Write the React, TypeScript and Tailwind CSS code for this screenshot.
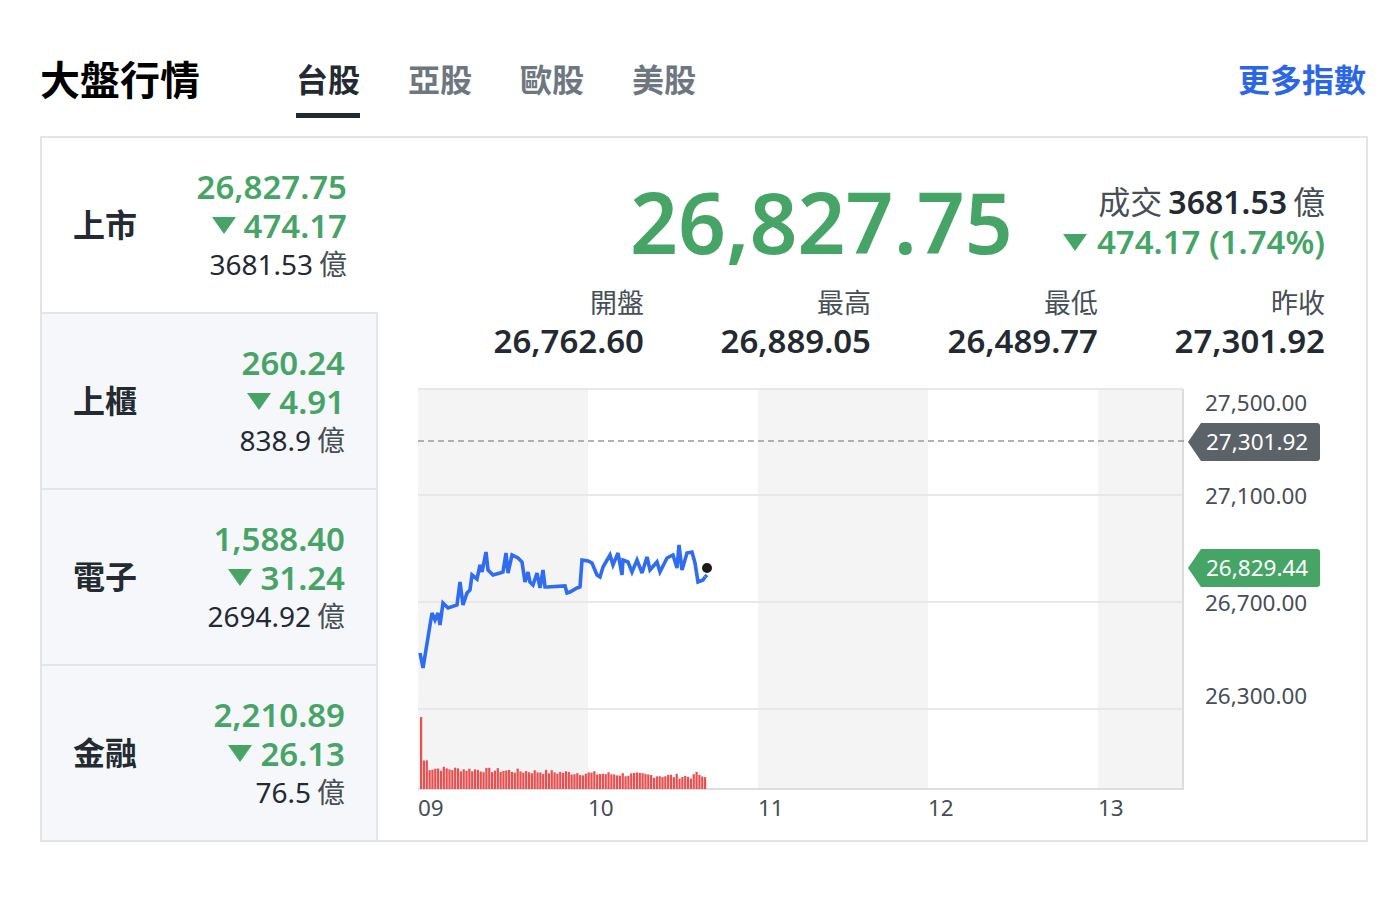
import React from "react";

const GREEN = "#46a566";
const FONT = { fontFamily: '"Noto Sans", "Noto Sans CJK TC", sans-serif' };

const tabs = ["台股", "亞股", "歐股", "美股"];

const markets = [
  { name: "上市", price: "26,827.75", change: "474.17", vol: "3681.53", active: true },
  { name: "上櫃", price: "260.24", change: "4.91", vol: "838.9" },
  { name: "電子", price: "1,588.40", change: "31.24", vol: "2694.92" },
  { name: "金融", price: "2,210.89", change: "26.13", vol: "76.5" },
];

const stats = [
  { label: "開盤", value: "26,762.60" },
  { label: "最高", value: "26,889.05" },
  { label: "最低", value: "26,489.77" },
  { label: "昨收", value: "27,301.92" },
];

// page coords of the intraday line, shifted into the chart svg below
const linePts = [
  [420, 653], [423, 668], [432, 613], [435, 620], [438, 613], [440, 625], [443, 603], [448, 608],
  [457, 605], [460, 582], [463, 605], [467, 593], [470, 590], [472, 575], [477, 579], [480, 565],
  [482, 572], [486, 552], [488, 570], [493, 575], [500, 573], [503, 572], [506, 553], [508, 573],
  [512, 555], [518, 558], [522, 562], [525, 582], [528, 572], [530, 582], [533, 585], [537, 573],
  [540, 588], [543, 570], [545, 587], [547, 587], [565, 586], [567, 593], [570, 592], [577, 588],
  [580, 587], [582, 560], [588, 561], [592, 563], [597, 575], [600, 577], [603, 567], [610, 555],
  [613, 565], [618, 553], [622, 575], [623, 560], [628, 562], [632, 572], [637, 560], [642, 573],
  [647, 557], [650, 570], [657, 562], [660, 572], [667, 558], [673, 555], [677, 568], [679, 545],
  [682, 570], [687, 553], [692, 552], [695, 563], [698, 582], [703, 580], [705, 577],
];

const OX = 417;
const OY = 380;

const volumes = (() => {
  const out: number[] = [];
  let seed = 7;
  const rnd = () => {
    seed = (seed * 9301 + 49297) % 233280;
    return seed / 233280;
  };
  for (let i = 0; i < 101; i++) {
    let h: number;
    if (i === 0) h = 72;
    else if (i < 3) h = 27 + rnd() * 3;
    else {
      const base = 21 - (i / 100) * 9;
      h = base + (rnd() - 0.5) * 5;
    }
    if (i === 97) h = 17;
    out.push(h);
  }
  return out;
})();

const DownTriangle = ({ w = 24, h = 17 }: { w?: number; h?: number }) => (
  <svg width={w} height={h} viewBox="0 0 24 17" className="shrink-0">
    <path d="M0 0 H24 L12 17 Z" fill={GREEN} />
  </svg>
);

const Chart = () => {
  const pts = linePts.map(([x, y]) => `${x - OX},${y - OY}`).join(" ");
  const last = linePts[linePts.length - 1];
  return (
    <svg width={949} height={460} viewBox="0 0 949 460" className="block">
      <rect x={1} y={9} width={170} height={400} fill="#f4f4f4" />
      <rect x={341} y={9} width={170} height={400} fill="#f4f4f4" />
      <rect x={681} y={9} width={85} height={400} fill="#f4f4f4" />
      {[9, 115, 222, 329].map((y) => (
        <line key={y} x1={1} x2={766} y1={y} y2={y} stroke="#e8e8e8" strokeWidth={2} />
      ))}
      <line x1={1} x2={767} y1={409} y2={409} stroke="#dcdde0" strokeWidth={2} />
      <line x1={766} x2={766} y1={9} y2={410} stroke="#dcdde0" strokeWidth={2} />
      <line x1={1} x2={771} y1={61} y2={61} stroke="#9a9a9a" strokeWidth={1.5} strokeDasharray="6 4" />

      {volumes.map((h, i) => (
        <rect key={i} x={3 + i * 2.84} y={409 - h} width={2.2} height={h} fill="#e84f4f" />
      ))}

      <polyline points={pts} fill="none" stroke="#2f6cf0" strokeWidth={3.6} strokeLinejoin="miter" strokeMiterlimit={3} />
      <polyline
        points={`${last[0] - OX},${last[1] - OY} ${707 - OX},${575 - OY}`}
        fill="none"
        stroke="#2f6cf0"
        strokeWidth={3.6}
      />
      <circle cx={707 - OX} cy={568 - OY} r={5} fill="#1b1b1b" />

      <g style={FONT} fontSize={22.5} fill="#464e56">
        <text x={788} y={31}>27,500.00</text>
        <text x={788} y={124}>27,100.00</text>
        <text x={788} y={231}>26,700.00</text>
        <text x={788} y={324}>26,300.00</text>
        {[
          ["09", 1],
          ["10", 171],
          ["11", 341],
          ["12", 511],
          ["13", 681],
        ].map(([t, x]) => (
          <text key={t as string} x={x as number} y={436}>
            {t}
          </text>
        ))}
      </g>

      <path d="M771 62 L784 43 H900 Q903 43 903 46 V78 Q903 81 900 81 H784 Z" fill="#5b6268" />
      <path d="M771 188 L784 169 H900 Q903 169 903 172 V204 Q903 207 900 207 H784 Z" fill={GREEN} />
      <g style={FONT} fontSize={22.5} fill="#ffffff">
        <text x={789} y={70}>27,301.92</text>
        <text x={789} y={196}>26,829.44</text>
      </g>
    </svg>
  );
};

export default function App() {
  return (
    <div className="min-h-[897px] w-[1394px] bg-white text-[#232a31]" style={FONT}>
      <div className="ml-[40px] w-[1328px]">
        <header className="flex items-start pt-[60px] pb-[18px]">
          <h1 className="w-[160px] text-[40px] leading-[40px] font-bold text-black">大盤行情</h1>
          <nav className="ml-[96px] flex gap-[48px]">
            {tabs.map((t, i) => (
              <div key={t} className="flex flex-col">
                <span
                  className={`text-[32px] leading-[40px] font-bold ${
                    i === 0 ? "text-[#232a31]" : "text-[#6e7780]"
                  }`}
                >
                  {t}
                </span>
                <span className={`mt-[13px] h-[5px] w-[64px] ${i === 0 ? "bg-[#232a31]" : "bg-transparent"}`} />
              </div>
            ))}
          </nav>
          <a className="ml-auto pr-[2px] text-[32px] leading-[40px] font-bold text-[#2b66e6]">更多指數</a>
        </header>

        <section className="flex h-[706px] border-2 border-[#e3e4e6]">
          <div className="flex w-[336px] flex-col">
            {markets.map((m) => (
              <div
                key={m.name}
                className={`flex items-center justify-between pl-[31px] pr-[31px] ${
                  m.active ? "h-[174px] bg-white" : "h-[176px] border-t-2 border-r-2 border-[#e2e5ea] bg-[#f5f7fa]"
                }`}
              >
                <span className="text-[32px] font-bold text-[#232a31]">{m.name}</span>
                <div className="flex flex-col items-end">
                  <span className="text-[33px] leading-[39px] font-semibold" style={{ color: GREEN }}>
                    {m.price}
                  </span>
                  <span
                    className="flex items-center gap-[8px] text-[33px] leading-[39px] font-semibold"
                    style={{ color: GREEN }}
                  >
                    <DownTriangle />
                    {m.change}
                  </span>
                  <span className="flex items-baseline gap-[6px] text-[28px] leading-[39px]">
                    {m.vol}
                    <span className="text-[#464e56]">億</span>
                  </span>
                </div>
              </div>
            ))}
          </div>

          <div className="flex flex-1 flex-col pt-[44px] pl-[39px]">
            <div className="flex h-[80px] items-center justify-end gap-[50px] pr-[41px]">
              <span className="text-[84px] leading-[80px] font-semibold" style={{ color: GREEN }}>
                26,827.75
              </span>
              <div className="flex flex-col items-end">
                <span className="flex items-baseline gap-[6px] text-[32px] leading-[40px] text-[#464e56]">
                  成交
                  <span className="font-semibold text-[#232a31]">3681.53</span>
                  億
                </span>
                <span
                  className="flex items-center gap-[10px] text-[33px] leading-[40px] font-semibold"
                  style={{ color: GREEN }}
                >
                  <DownTriangle />
                  474.17 (1.74%)
                </span>
              </div>
            </div>

            <div className="mt-[23px] grid w-[908px] grid-cols-4">
              {stats.map((s) => (
                <div key={s.label} className="flex flex-col items-end">
                  <span className="text-[27px] leading-[36px] text-[#464e56]">{s.label}</span>
                  <span className="text-[33px] leading-[40px] font-semibold text-[#232a31]">{s.value}</span>
                </div>
              ))}
            </div>

            <div className="mt-[19px]">
              <Chart />
            </div>
          </div>
        </section>
      </div>
    </div>
  );
}
